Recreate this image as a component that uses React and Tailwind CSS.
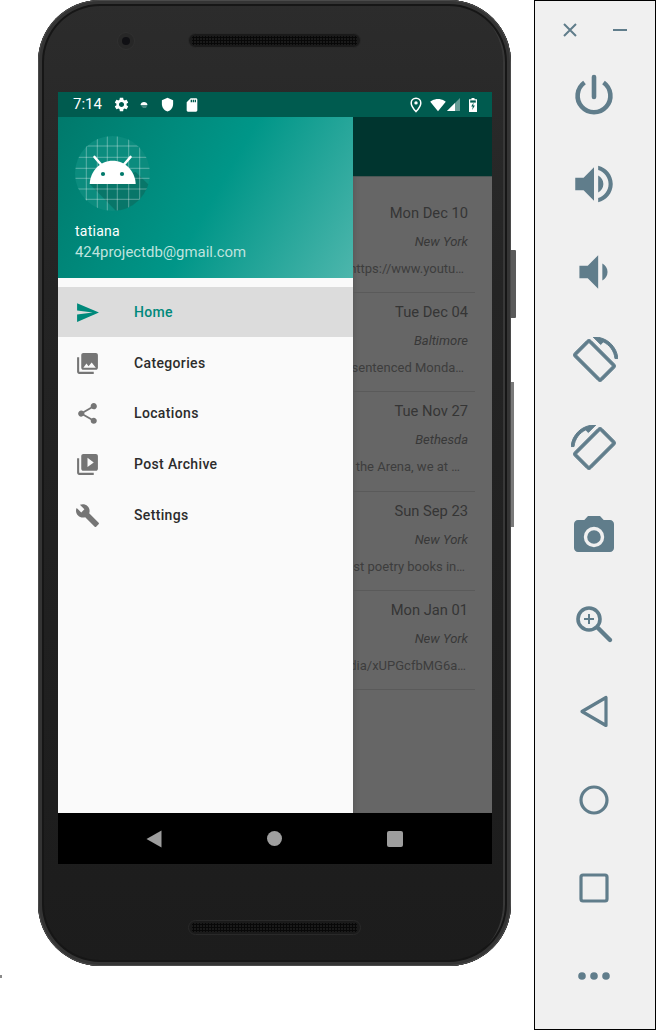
const send = "M2.01 21L23 12 2.01 3 2 10l15 2-15 2z";
const collections = "M22 16V4c0-1.1-.9-2-2-2H8c-1.1 0-2 .9-2 2v12c0 1.1.9 2 2 2h12c1.1 0 2-.9 2-2zm-11-4l2.03 2.71L16 11l4 5H8l3-4zM2 6v14c0 1.1.9 2 2 2h14v-2H4V6H2z";
const share = "M18 16.08c-.76 0-1.44.3-1.96.77L8.91 12.7c.05-.23.09-.46.09-.7s-.04-.47-.09-.7l7.05-4.11c.54.5 1.25.81 2.04.81 1.66 0 3-1.34 3-3s-1.34-3-3-3-3 1.34-3 3c0 .24.04.47.09.7L8.04 9.81C7.5 9.31 6.79 9 6 9c-1.66 0-3 1.34-3 3s1.34 3 3 3c.79 0 1.5-.31 2.04-.81l7.12 4.16c-.05.21-.08.43-.08.65 0 1.61 1.31 2.92 2.92 2.92 1.61 0 2.92-1.31 2.92-2.92s-1.31-2.92-2.92-2.92z";
const video = "M4 6H2v14c0 1.1.9 2 2 2h14v-2H4V6zm16-4H8c-1.1 0-2 .9-2 2v12c0 1.1.9 2 2 2h12c1.1 0 2-.9 2-2V4c0-1.1-.9-2-2-2zm-8 12.5v-9l6 4.5-6 4.5z";
const build = "M22.7 19l-9.1-9.1c.9-2.3.4-5-1.5-6.9-2-2-5-2.4-7.4-1.3L9 6 6 9 1.6 4.7C.4 7.1.9 10.1 2.9 12.1c1.9 1.9 4.6 2.4 6.9 1.5l9.1 9.1c.4.4 1 .4 1.4 0l2.3-2.3c.5-.4.5-1.1.1-1.4z";
const gear = "M19.14 12.94c.04-.3.06-.61.06-.94 0-.32-.02-.64-.07-.94l2.03-1.58c.18-.14.23-.41.12-.61l-1.92-3.32c-.12-.22-.37-.29-.59-.22l-2.39.96c-.5-.38-1.03-.7-1.62-.94l-.36-2.54c-.04-.24-.24-.41-.48-.41h-3.84c-.24 0-.43.17-.47.41l-.36 2.54c-.59.24-1.13.57-1.62.94l-2.39-.96c-.22-.08-.47 0-.59.22L2.74 8.87c-.12.21-.08.47.12.61l2.03 1.58c-.05.3-.09.63-.09.94s.02.64.07.94l-2.03 1.58c-.18.14-.23.41-.12.61l1.92 3.32c.12.22.37.29.59.22l2.39-.96c.5.38 1.03.7 1.62.94l.36 2.54c.05.24.24.41.48.41h3.84c.24 0 .44-.17.47-.41l.36-2.54c.59-.24 1.13-.56 1.62-.94l2.39.96c.22.08.47 0 .59-.22l1.92-3.32c.12-.22.07-.47-.12-.61l-2.01-1.58zM12 15.6c-1.98 0-3.6-1.62-3.6-3.6s1.62-3.6 3.6-3.6 3.6 1.62 3.6 3.6-1.62 3.6-3.6 3.6z";
const volUp = "M3 9v6h4l5 5V4L7 9H3zm13.5 3c0-1.77-1.02-3.29-2.5-4.03v8.05c1.48-.73 2.5-2.25 2.5-4.02zM14 3.23v2.06c2.89.86 5 3.54 5 6.71s-2.11 5.85-5 6.71v2.06c4.01-.91 7-4.49 7-8.77s-2.99-7.86-7-8.77z";
const volDown = "M18.5 12c0-1.77-1.02-3.29-2.5-4.03v8.05c1.48-.72 2.5-2.24 2.5-4.02zM5 9v6h4l5 5V4L9 9H5z";
const rotate = "M16.48 2.52c3.27 1.55 5.61 4.72 5.97 8.48h1.5C23.44 4.84 18.29 0 12 0l-.66.03 3.81 3.81 1.33-1.32zm-6.25-.77c-.59-.59-1.54-.59-2.12 0L1.75 8.11c-.59.59-.59 1.54 0 2.12l12.02 12.02c.59.59 1.54.59 2.12 0l6.36-6.36c.59-.59.59-1.54 0-2.12L10.23 1.75zm4.6 19.44L2.81 9.17l6.36-6.36 12.02 12.02-6.36 6.36z";

const menu = [
  { label: "Home", d: send, active: true },
  { label: "Categories", d: collections },
  { label: "Locations", d: share },
  { label: "Post Archive", d: video },
  { label: "Settings", d: build },
];

const rows = [
  { date: "Mon Dec 10", place: "New York", body: "https://www.youtu…", pad: "pr-[4px]" },
  { date: "Tue Dec 04", place: "Baltimore", body: "was sentenced Monda…", pad: "pr-[4px]" },
  { date: "Tue Nov 27", place: "Bethesda", body: "to the Arena, we at …", pad: "pr-[8px]" },
  { date: "Sun Sep 23", place: "New York", body: "best poetry books in…", pad: "pr-[3px]" },
  { date: "Mon Jan 01", place: "New York", body: "media/xUPGcfbMG6a…", pad: "pr-[2px]" },
];

function P({ d, size, className, stroke }) {
  return (
    <svg width={size} height={size} viewBox="0 0 24 24" className={className} fill="currentColor" stroke={stroke ? "currentColor" : "none"} strokeWidth={stroke || 0}>
      <path d={d} />
    </svg>
  );
}

function Speaker() {
  return (
    <div className="w-[173px] h-[15px] rounded-full bg-[#1a1a1a] border border-[#292929] px-[3px] py-[2px]">
      <div className="w-full h-full bg-[radial-gradient(circle,#080808_1px,transparent_1.2px)] bg-[length:3px_3px]" />
    </div>
  );
}

function Avatar() {
  const xs = [11.3, 22.3, 32.3, 42.3, 53.7, 64.7];
  const ys = [10, 21.3, 32.3, 42.3, 53, 63.3];
  return (
    <svg width="75" height="75" viewBox="0 0 75 75">
      <defs>
        <clipPath id="avatar-clip">
          <circle cx="37.5" cy="37.5" r="37.5" />
        </clipPath>
      </defs>
      <g clipPath="url(#avatar-clip)">
        <rect width="75" height="75" fill="#0b8c7e" />
        <polygon points="14.7,48 60.7,36 75,50 75,75 41,75" fill="#00312b" opacity="0.24" />
        {xs.map((x) => (
          <line key={x} x1={x} x2={x} y1="0" y2="75" stroke="#ffffff" strokeOpacity="0.42" strokeWidth="0.8" />
        ))}
        {ys.map((y) => (
          <line key={y} y1={y} y2={y} x1="0" x2="75" stroke="#ffffff" strokeOpacity="0.42" strokeWidth="0.8" />
        ))}
      </g>
      <path d="M14.7 48c.4-12.8 10.6-23.3 23-23.3s22.6 10.5 23 23.3z" fill="#ffffff" />
      <line x1="19.5" y1="21" x2="26" y2="28.5" stroke="#ffffff" strokeWidth="2.6" strokeLinecap="round" />
      <line x1="55.5" y1="21" x2="49" y2="28.5" stroke="#ffffff" strokeWidth="2.6" strokeLinecap="round" />
      <circle cx="28" cy="38" r="2.1" fill="#00796b" />
      <circle cx="47" cy="38" r="2.1" fill="#00796b" />
    </svg>
  );
}

function StatusBar() {
  return (
    <div className="h-[25px] shrink-0 bg-[#005b4f] flex items-center text-white pl-[15px] pr-[15px]">
      <span className="text-[15px] leading-none w-[40px]">7:14</span>
      <P d={gear} size={17} className="-ml-[0.5px]" />
      <svg width="10" height="10" viewBox="0 0 10 10" className="ml-[6px] mt-[1px] w-[16px]">
        <path d="M1.5 5c.2-1.9 1.7-3 3.5-3s3.3 1.1 3.5 3z" fill="#ffffff" />
        <path d="M1.5 5h7l-1.5 3h-3z" fill="#ffffff" opacity="0.28" />
      </svg>
      <P d="M12 1L3 5v6c0 5.55 3.84 10.74 9 12 5.16-1.26 9-6.45 9-12V5l-9-4z" size={15} className="ml-[8px]" />
      <P d="M18 2h-8L4.02 8 4 20c0 1.1.9 2 2 2h12c1.1 0 2-.9 2-2V4c0-1.1-.9-2-2-2zm-6 6h-2V4h2v4zm3 0h-2V4h2v4zm3 0h-2V4h2v4z" size={16} className="ml-[9px]" />
      <div className="flex-1" />
      <svg width="14" height="16" viewBox="0 0 14 16" fill="none">
        <path d="M7 1.2C4.2 1.2 2.2 3.2 2.2 5.9 2.2 9.3 7 14.6 7 14.6s4.8-5.3 4.8-8.7c0-2.7-2-4.7-4.8-4.7z" stroke="#ffffff" strokeWidth="1.5" />
        <circle cx="7" cy="5.9" r="1.7" fill="#ffffff" />
      </svg>
      <P d="M12.01 21.49L23.64 7c-.45-.34-4.93-4-11.64-4C5.28 3 .81 6.66.36 7l11.63 14.49.01.01.01-.01z" size={16} className="ml-[7px]" />
      <svg width="14" height="14" viewBox="0 0 14 14" className="ml-[1px]">
        <path d="M0 13h13V0z" fill="#ffffff" opacity="0.4" />
        <path d="M0 13h8V5z" fill="#ffffff" />
      </svg>
      <svg width="8" height="14" viewBox="0 0 8 14" className="ml-[8px]">
        <path d="M2.5 0h3v1.2H8V14H0V1.2h2.5z" fill="#ffffff" />
        <rect x="1.2" y="2.4" width="5.6" height="2.2" fill="#005b4f" />
        <path d="M4.6 4.6L2.2 8.6h1.6L3.2 12l2.7-4.4H4.2z" fill="#005b4f" />
      </svg>
    </div>
  );
}

function Drawer() {
  return (
    <div className="w-[295px] shrink-0 bg-[#fafafa] flex flex-col">
      <div className="h-[161px] shrink-0 flex flex-col pl-[17px] pt-[19px] bg-[linear-gradient(120deg,#00796b_0%,#009688_52%,#4db6ac_100%)]">
        <Avatar />
        <div className="mt-[10px] text-[14px] leading-[20px] tracking-[0.25px] text-white">tatiana</div>
        <div className="mt-[1px] text-[14.9px] leading-[20px] text-[#bfe3de]">424projectdb@gmail.com</div>
      </div>
      <div className="pt-[9px] flex flex-col">
        {menu.map((m) => (
          <div
            key={m.label}
            className={
              m.active
                ? "h-[50px] mb-[0.7px] flex items-center pl-[17px] bg-[#dcdcdc] text-[#00897b]"
                : "h-[50.7px] flex items-center pl-[17px] text-[#2c2c2c]"
            }
          >
            <P d={m.d} size={25} className={m.active ? "text-[#00897b]" : "text-[#757575]"} />
            <span className="ml-[34px] text-[14px] tracking-[0.35px] font-medium">{m.label}</span>
          </div>
        ))}
      </div>
    </div>
  );
}

function ListPane() {
  return (
    <div className="flex-1 min-w-0 flex flex-col bg-[#666666] shadow-[inset_6px_0_6px_-5px_rgba(0,0,0,0.15)]">
      <div className="h-[60px] shrink-0 bg-[#00352f] border-b border-[#4a5654]" />
      <div className="pt-[16.7px] pr-[17px] flex flex-col">
        {rows.map((r) => (
          <div key={r.date} className="h-[99.3px] pt-[8px] border-b border-[#5a5a5a] flex flex-col overflow-hidden">
            <div className="h-[22px] pr-[7px] text-right text-[14.7px] leading-[22px] text-[#353535] whitespace-nowrap">{r.date}</div>
            <div className="mt-[8px] h-[20px] pr-[7px] text-right text-[13px] leading-[20px] italic text-[#383838] whitespace-nowrap">{r.place}</div>
            <div className="mt-[7px] h-[20px] pr-[7px] flex justify-end overflow-hidden">
              <span className={"shrink-0 text-[13px] leading-[20px] text-[#3d3d3d] whitespace-nowrap " + r.pad}>{r.body}</span>
            </div>
          </div>
        ))}
      </div>
    </div>
  );
}

function NavBar() {
  return (
    <div className="h-[51px] shrink-0 bg-black flex items-center pl-[88px]">
      <svg width="16" height="18" viewBox="0 0 16 18" fill="#9e9e9e">
        <path d="M15.5 0.5v17L0.5 9z" />
      </svg>
      <div className="ml-[105px] w-[15px] h-[15px] rounded-full bg-[#9e9e9e]" />
      <div className="ml-[105px] w-[16px] h-[16px] rounded-[2px] bg-[#9e9e9e]" />
    </div>
  );
}

function Phone() {
  return (
    <div className="relative ml-[38px] w-[473px] h-[966px] shrink-0 rounded-[62px] flex flex-col pl-[20px] bg-[linear-gradient(180deg,#2c2c2c_0%,#242424_30%,#1c1c1c_100%)] shadow-[inset_0_0_0_1px_#4a4a4a,inset_0_0_0_4px_#343434,inset_0_0_0_6px_#161616,inset_-8px_0_0_#383838]">
      <div className="absolute right-[-5px] top-[250px] w-[5px] h-[68px] bg-[#5a5a5a] rounded-r-[1px]" />
      <div className="absolute right-[-3px] top-[382px] w-[3px] h-[145px] bg-[#7a7a7a]" />
      <div className="absolute left-[79px] top-[32px] w-[18px] h-[18px] rounded-full bg-[#272727] border border-[#303030] flex items-center justify-center">
        <div className="w-[8px] h-[8px] rounded-full bg-[#101014]" />
      </div>
      <div className="h-[92px] shrink-0 pl-[130px] pt-[33px]">
        <Speaker />
      </div>
      <div className="w-[434px] h-[772px] shrink-0 flex flex-col overflow-hidden">
        <StatusBar />
        <div className="flex-1 min-h-0 flex">
          <Drawer />
          <ListPane />
        </div>
        <NavBar />
      </div>
      <div className="pl-[130px] pt-[56px]">
        <Speaker />
      </div>
    </div>
  );
}

function Tool({ children }) {
  return <div className="h-[88px] w-full shrink-0 flex items-center justify-center pr-[2px]">{children}</div>;
}

function SidePanel() {
  return (
    <div className="ml-[23px] w-[122px] h-[1030px] shrink-0 border border-black bg-[#f0f0f0] flex flex-col text-[#607d8b]">
      <div className="h-[51px] shrink-0 flex items-start pt-[20px] pl-[26px]">
        <svg width="18" height="18" viewBox="0 0 18 18" stroke="currentColor" strokeWidth="2" fill="none">
          <path d="M3 3l12 12M15 3L3 15" />
        </svg>
        <div className="ml-[34px] mt-[8px] w-[14px] h-[2px] bg-[#607d8b]" />
      </div>
      <Tool>
        <svg width="48" height="48" viewBox="0 0 48 48" fill="none" stroke="currentColor" strokeWidth="4.6">
          <path d="M33.5 10.500A16.4 16.4 0 1 1 14.500 10.500" />
          <path d="M24 5v20" strokeLinecap="round" />
        </svg>
      </Tool>
      <Tool><P d={volUp} size={50} /></Tool>
      <Tool><P d={volDown} size={50} /></Tool>
      <Tool><P d={rotate} size={47} stroke={0.5} /></Tool>
      <Tool><P d={rotate} size={47} stroke={0.5} className="-scale-x-100" /></Tool>
      <Tool>
        <svg width="48" height="48" viewBox="0 0 48 48">
          <path d="M18 4l-3.700 4H8c-2.200 0-4 1.800-4 4v24c0 2.200 1.800 4 4 4h32c2.200 0 4-1.800 4-4V12c0-2.200-1.800-4-4-4h-6.300L30 4z" fill="currentColor" />
          <circle cx="24" cy="25" r="8.500" fill="none" stroke="#f0f0f0" strokeWidth="3.400" />
        </svg>
      </Tool>
      <Tool>
        <svg width="44" height="44" viewBox="0 0 44 44" fill="none" stroke="currentColor">
          <circle cx="17" cy="17" r="11" strokeWidth="3.600" />
          <path d="M17 12v10M12 17h10" strokeWidth="2" />
          <path d="M26 26l12 12" strokeWidth="4.400" strokeLinecap="round" />
        </svg>
      </Tool>
      <Tool>
        <svg width="44" height="44" viewBox="0 0 44 44" fill="none" stroke="currentColor" strokeWidth="3.200" strokeLinejoin="round">
          <path d="M34 7.500v28L10 21.500z" />
        </svg>
      </Tool>
      <Tool>
        <svg width="44" height="44" viewBox="0 0 44 44" fill="none" stroke="currentColor" strokeWidth="3.200">
          <circle cx="22" cy="22" r="13" />
        </svg>
      </Tool>
      <Tool>
        <svg width="44" height="44" viewBox="0 0 44 44" fill="none" stroke="currentColor" strokeWidth="3.200">
          <rect x="9" y="9" width="26" height="26" rx="2" />
        </svg>
      </Tool>
      <Tool>
        <svg width="44" height="44" viewBox="0 0 44 44" fill="currentColor">
          <circle cx="10" cy="22" r="3.800" />
          <circle cx="22" cy="22" r="3.800" />
          <circle cx="34" cy="22" r="3.800" />
        </svg>
      </Tool>
    </div>
  );
}

export default function App() {
  return (
    <div className="relative w-[656px] h-[1030px] overflow-hidden bg-white font-['Roboto',sans-serif] flex items-start">
      <Phone />
      <SidePanel />
      <div className="absolute left-0 top-[975px] w-[2px] h-[3px] bg-[#8a8a8a]" />
    </div>
  );
}
